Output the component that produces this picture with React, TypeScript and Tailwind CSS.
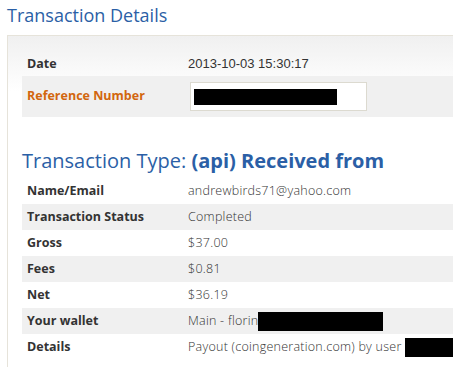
const rows: { label: string; value: string; redact?: number }[] = [
  { label: 'Name/Email', value: 'andrewbirds71@yahoo.com' },
  { label: 'Transaction Status', value: 'Completed' },
  { label: 'Gross', value: '$37.00' },
  { label: 'Fees', value: '$0.81' },
  { label: 'Net', value: '$36.19' },
  { label: 'Your wallet', value: 'Main - florin', redact: 125 },
  { label: 'Details', value: 'Payout (coingeneration.com) by user ', redact: 50 },
];

export default function App() {
  return (
    <div className="w-[453px] h-[367px] overflow-hidden bg-white font-['Open_Sans',sans-serif]">
      <h1 className="pl-[7px] pt-[3px] text-[18px] leading-[24px] text-[#2b5fa6]">
        Transaction Details
      </h1>

      {/* panel runs off the right edge */}
      <div className="ml-[7px] mt-[8px] w-[470px] h-[400px] border border-[#e6e3da] bg-[linear-gradient(#f0f0f0,#ffffff_55px)] pl-[14px] pt-[16px]">
        <div className="flex items-center h-[24px] text-[12.5px] text-[#333]">
          <div className="w-[166px] pl-[5px] font-bold">Date</div>
          <div className="font-['Liberation_Sans',sans-serif] text-[13px] text-[#333]">2013-10-03 15:30:17</div>
        </div>
        <div className="flex items-center h-[41px] bg-[#f0f0f0] text-[12.5px]">
          <div className="w-[168px] pl-[5px] font-bold text-[#d2660e]">Reference Number</div>
          <div className="w-[177px] h-[29px] border border-[#dcdad0] bg-white flex items-center pl-[3px]">
            <div className="w-[143px] h-[16px] bg-black" />
          </div>
        </div>

        <h2 className="mt-[28px] h-[32px] text-[20px] leading-[32px] text-[#2b5fa6]">
          Transaction Type: <span className="font-bold">(api) Received from</span>
        </h2>

        <div className="mt-[1px]">
          {rows.map((r, i) => (
            <div
              key={r.label}
              className={`flex items-center h-[26px] text-[12.5px] ${i % 2 === 1 ? 'bg-[#f0f0f0]' : ''}`}
            >
              <div className="w-[166px] pl-[5px] font-bold text-[#333]">{r.label}</div>
              <div className="flex items-center font-light text-[12.5px] text-[#333] tracking-[0.25px]">
                <span className="whitespace-pre">{r.value}</span>
                {r.redact && <span className="inline-block h-[19px] bg-black" style={{ width: r.redact }} />}
              </div>
            </div>
          ))}
        </div>
      </div>
    </div>
  );
}
